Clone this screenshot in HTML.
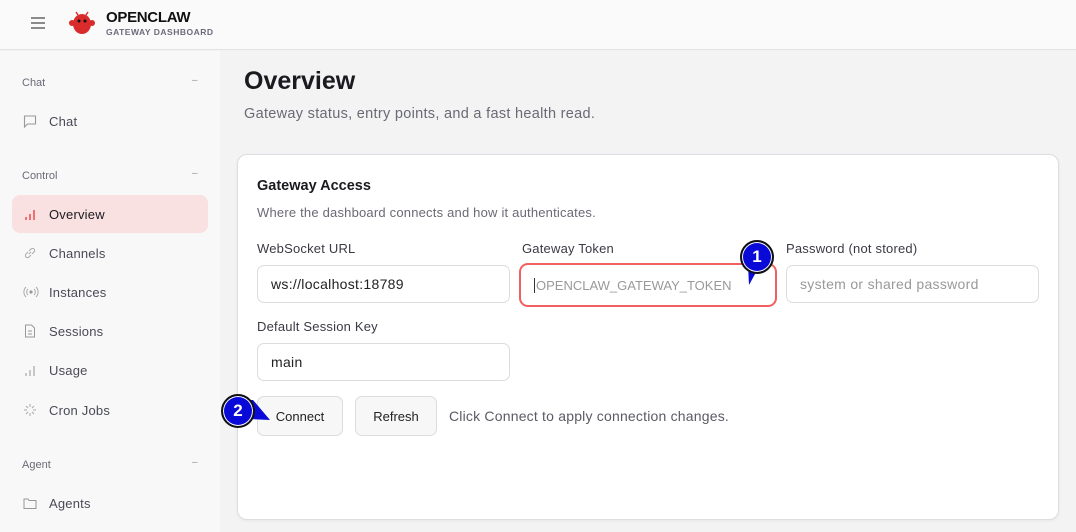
<!DOCTYPE html>
<html><head><style>
*{box-sizing:border-box;margin:0;padding:0}
body{width:1076px;height:532px;overflow:hidden;font-family:"Liberation Sans",sans-serif;background:#f3f3f4;color:#1a1a1f;position:relative}
.hdr{position:absolute;left:0;top:0;width:1076px;height:50px;background:#fafafa;border-bottom:1px solid #e2e2e4}
.side{position:absolute;left:0;top:51px;width:220px;height:481px;background:#f8f8f9}
.sec{position:absolute;left:22px;font-size:11px;color:#6b6b75}
.dash{position:absolute;left:192px;font-size:10px;color:#999}
.item{position:absolute;left:12px;width:196px;height:38px;border-radius:8px;font-size:13px;color:#4a4a55;display:flex;align-items:center;padding-left:37px;letter-spacing:.2px}
.item svg{position:absolute;left:11px;top:12px}
.act{background:#f9e1e1;color:#1a1a1f}
.card{position:absolute;left:237px;top:154px;width:822px;height:366px;background:#fff;border:1px solid #dedee2;border-radius:10px;box-shadow:0 1px 3px rgba(0,0,0,.05)}
.lbl{position:absolute;font-size:13px;color:#3a3a44;letter-spacing:.2px}
.inp{position:absolute;height:38px;border:1px solid #dcdce0;border-radius:7px;background:#fff;font-size:14px;padding-left:13px;display:flex;align-items:center;color:#222;letter-spacing:.3px}
.btn{position:absolute;height:40px;border:1px solid #dcdce0;border-radius:7px;background:#f7f7f8;font-size:13px;display:flex;align-items:center;justify-content:center;color:#222}
.badge{position:absolute;width:34px;height:34px;border-radius:50%;background:#0a0ad8;border:2px solid #111;box-shadow:0 0 0 1px #fff inset;color:#fff;font-weight:bold;font-size:17px;display:flex;align-items:center;justify-content:center}
</style></head><body>
<div class="hdr">
<svg style="position:absolute;left:30px;top:16px" width="16" height="14"><path d="M1 2h14M1 7h14M1 12h14" stroke="#666" stroke-width="1.6"/></svg>
<svg style="position:absolute;left:68px;top:9px" width="28" height="28" viewBox="0 0 28 28"><path d="M8 3l2 3M20 3l-2 3" stroke="#d33" stroke-width="1.5"/><ellipse cx="14" cy="15" rx="9" ry="10" fill="#d92b2b"/><ellipse cx="4" cy="14" rx="3" ry="3" fill="#d92b2b"/><ellipse cx="24" cy="14" rx="3" ry="3" fill="#d92b2b"/><circle cx="11" cy="12" r="1.5" fill="#111"/><circle cx="17" cy="12" r="1.5" fill="#111"/></svg>
<div style="position:absolute;left:106px;top:9px;font-size:15px;font-weight:bold;color:#111;letter-spacing:-.3px">OPENCLAW</div>
<div style="position:absolute;left:106px;top:27px;font-size:8.5px;font-weight:bold;color:#6b6b7a;letter-spacing:.5px">GATEWAY DASHBOARD</div>
</div>
<div class="side">
<div class="sec" style="top:26px">Chat</div><div class="dash" style="top:24px">–</div>
<div class="item" style="top:51px">
<svg width="14" height="14"><path d="M1.5 2h11v8h-8l-3 3z" fill="none" stroke="#999" stroke-width="1.1"/></svg>Chat</div>
<div class="sec" style="top:119px">Control</div><div class="dash" style="top:117px">–</div>
<div class="item act" style="top:144px"><svg width="14" height="14"><path d="M3 13v-3M7 13v-6M11 13v-10" stroke="#e55" stroke-width="1.6"/></svg>Overview</div>
<div class="item" style="top:183px"><svg width="14" height="14"><path d="M6 8l2-2M5 6l-2 2a2 2 0 003 3l2-2M9 8l2-2a2 2 0 00-3-3l-2 2" fill="none" stroke="#aaa" stroke-width="1"/></svg>Channels</div>
<div class="item" style="top:222px"><svg width="16" height="14"><circle cx="8" cy="7" r="1.6" fill="#999"/><path d="M5 4a4 4 0 000 6M11 4a4 4 0 010 6M3 2a7 7 0 000 10M13 2a7 7 0 010 10" fill="none" stroke="#aaa" stroke-width="1"/></svg>Instances</div>
<div class="item" style="top:261px"><svg width="14" height="14"><path d="M2.5 1h6l3 3v9h-9z M5 7h4M5 10h4" fill="none" stroke="#999" stroke-width="1"/></svg>Sessions</div>
<div class="item" style="top:300px"><svg width="14" height="14"><path d="M3 13v-3M7 13v-6M11 13v-10" stroke="#bbb" stroke-width="1.6"/></svg>Usage</div>
<div class="item" style="top:340px"><svg width="14" height="14"><path d="M7 1v3M7 10v3M1 7h3M10 7h3M3 3l2 2M9 9l2 2M11 3l-2 2M5 9l-2 2" stroke="#aaa" stroke-width="1"/></svg>Cron Jobs</div>
<div class="sec" style="top:408px">Agent</div><div class="dash" style="top:406px">–</div>
<div class="item" style="top:433px"><svg width="14" height="14"><path d="M1 3h4l1 1.5h7v8h-12z" fill="none" stroke="#999" stroke-width="1"/></svg>Agents</div>
</div>
<div style="position:absolute;left:244px;top:67px;font-size:25px;font-weight:bold;color:#1a1a1f">Overview</div>
<div style="position:absolute;left:244px;top:106px;font-size:14.5px;color:#6a6a74;letter-spacing:.3px">Gateway status, entry points, and a fast health read.</div>
<div class="card"></div>
<div style="position:absolute;left:257px;top:178px;font-size:14.5px;font-weight:bold">Gateway Access</div>
<div style="position:absolute;left:257px;top:205px;font-size:13px;color:#6a6a74;letter-spacing:.2px">Where the dashboard connects and how it authenticates.</div>
<div class="lbl" style="left:257px;top:241px">WebSocket URL</div>
<div class="lbl" style="left:522px;top:241px">Gateway Token</div>
<div class="lbl" style="left:786px;top:241px">Password (not stored)</div>
<div class="inp" style="left:257px;top:265px;width:253px">ws://localhost:18789</div>
<div class="inp" style="left:519px;top:263px;width:258px;height:44px;border:2px solid #f06060;border-radius:9px;color:#999;font-size:13px;letter-spacing:0"><span style="border-left:1px solid #333;padding-left:1px">OPENCLAW_GATEWAY_TOKEN</span></div>
<div class="inp" style="left:786px;top:265px;width:253px;color:#999">system or shared password</div>
<div class="lbl" style="left:257px;top:319px">Default Session Key</div>
<div class="inp" style="left:257px;top:343px;width:253px">main</div>
<div class="btn" style="left:257px;top:396px;width:86px">Connect</div>
<div class="btn" style="left:355px;top:396px;width:82px">Refresh</div>
<div style="position:absolute;left:449px;top:408px;font-size:14px;color:#5a5a64;letter-spacing:.2px">Click Connect to apply connection changes.</div>
<svg style="position:absolute;left:740px;top:265px" width="22" height="22"><path d="M8 0l12 0-11 20z" fill="#0a0ad8"/></svg>
<div class="badge" style="left:740px;top:240px">1</div>
<svg style="position:absolute;left:245px;top:400px" width="26" height="24"><path d="M0 0l8 0 17 20-20 -1z" fill="#0a0ad8"/></svg>
<div class="badge" style="left:221px;top:394px">2</div>
</body></html>
